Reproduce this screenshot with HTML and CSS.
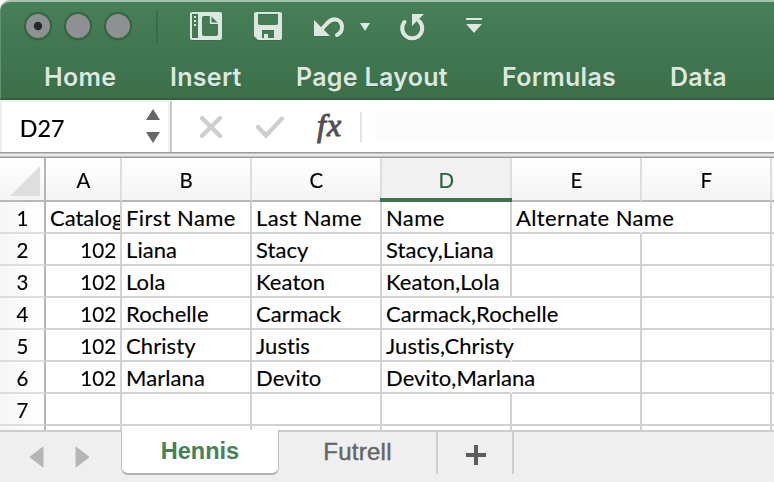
FILE: index.html
```html
<!DOCTYPE html>
<html lang="en">
<head>
<meta charset="utf-8">
<title>Workbook</title>
<link rel="stylesheet" href="styles.css">
</head>
<body>
<div class="window">
  <header class="ribbon">
    <div class="titlebar">
      <svg class="tools" width="774" height="54" viewBox="0 0 774 54" aria-hidden="true">
        <g fill="#8f9094" stroke="#35663f" stroke-width="2"><circle cx="38" cy="26" r="13"/><circle cx="78" cy="26" r="13"/><circle cx="118" cy="26" r="13"/></g>
        <circle cx="38" cy="26" r="4.2" fill="#252829"/>
        <path d="M157 10v32" stroke="#3b6c49" stroke-width="2"/>
        <g fill="#dce7df">
          <path fill-rule="evenodd" d="M192 12h28q2 0 2 2v24q0 2-2 2h-28q-2 0-2-2V14q0-2 2-2zM192 14v24h6V14zM204 16q-2 0-2 2v16q0 2 2 2h12q2 0 2-2V23l-7-7z"/>
          <path d="M194 16h2v2h-2zM194 20h2v2h-2zM194 24h2v2h-2z"/>
          <path fill-rule="evenodd" d="M256 12h24q2 0 2 2v24q0 2-2 2h-22l-4-4V14q0-2 2-2zM258 14v9q0 2 2 2h16q2 0 2-2v-9zM262 30v8h2v-4h4v4h6v-8z"/>
          <path d="M314 20v16h16z"/>
          <path d="M360 23h10l-5 8zM412 14h12l-12 12zM466 24h16l-8 9zM466 18h16v2h-16z"/>
        </g>
        <g fill="none" stroke="#dce7df" stroke-width="4">
          <path d="M210.700 16v7.300H218" stroke-width="1.600"/>
          <path d="M321 30l7-7.500C334 16.500 342 20 342 27C342 31 340 33.500 337 35" stroke-linecap="round"/>
          <path d="M404.500 22A10 10 0 1 0 419 21" stroke-linecap="round"/>
        </g>
      </svg>
    </div>
    <nav class="menu"><span class="home">Home</span><span class="insert">Insert</span><span class="layout">Page Layout</span><span class="formulas">Formulas</span><span class="data">Data</span></nav>
  </header>
  <section class="formula-bar">
    <div class="name-box"><span>D27</span>
      <svg width="14" height="34" viewBox="0 0 14 34" fill="#666"><path d="M0 11L7 0l7 11zM0 23h14L7 34z"/></svg>
    </div>
    <svg class="actions" width="90" height="30" viewBox="0 0 90 30" fill="none" stroke="#cfcfcf" stroke-width="4.4" stroke-linecap="round"><path d="M5 7l18 18M23 7L5 25M61 16l8 8.500L85 7.500"/></svg>
    <span class="fx">fx</span><div class="formula-input"></div>
  </section>
  <div class="divider"></div>
  <main class="sheet">
    <div class="row head"><div class="corner"><svg width="30" height="30"><path d="M0 30L30 0v30z" fill="#dedede"/></svg></div><div><span>A</span></div><div><span>B</span></div><div><span>C</span></div><div class="selected"><span>D</span></div><div><span>E</span></div><div><span>F</span></div><div></div></div>
    <div class="row titles"><b><span>1</span></b><div class="clip"><span>Catalog</span></div><div><span>First Name</span></div><div><span>Last Name</span></div><div><span>Name</span></div><div class="open"><span>Alternate Name</span></div><div></div><div></div></div>
    <div class="row"><b><span>2</span></b><div class="num"><span>102</span></div><div><span>Liana</span></div><div><span>Stacy</span></div><div><span>Stacy,Liana</span></div><div></div><div></div><div></div></div>
    <div class="row"><b><span>3</span></b><div class="num"><span>102</span></div><div><span>Lola</span></div><div><span>Keaton</span></div><div><span>Keaton,Lola</span></div><div></div><div></div><div></div></div>
    <div class="row"><b><span>4</span></b><div class="num"><span>102</span></div><div><span>Rochelle</span></div><div><span>Carmack</span></div><div class="open"><span>Carmack,Rochelle</span></div><div></div><div></div><div></div></div>
    <div class="row"><b><span>5</span></b><div class="num"><span>102</span></div><div><span>Christy</span></div><div><span>Justis</span></div><div class="open"><span>Justis,Christy</span></div><div></div><div></div><div></div></div>
    <div class="row"><b><span>6</span></b><div class="num"><span>102</span></div><div><span>Marlana</span></div><div><span>Devito</span></div><div class="open"><span>Devito,Marlana</span></div><div></div><div></div><div></div></div>
    <div class="row"><b><span>7</span></b><div></div><div></div><div></div><div></div><div></div><div></div><div></div></div>
    <div class="row last"><b></b><div></div><div></div><div></div><div></div><div></div><div></div><div></div></div>
  </main>
  <footer class="tabs">
    <div class="arrows"><svg width="62" height="22" viewBox="0 0 62 22" fill="#b5b5b5" stroke="#b5b5b5" stroke-linejoin="round"><path d="M1 11L14 1v20zM47 1v20L60 11z"/></svg></div>
    <div class="tab active">Hennis</div><div class="tab">Futrell</div>
    <div class="add"><svg width="20" height="20"><path d="M10 0v20M0 10h20" stroke="#5c5c5c" stroke-width="4"/></svg></div>
  </footer>
</div>
</body>
</html>
```
FILE: styles.css
```css
* { box-sizing: border-box; }
body { margin: 0; background: #fff; font-family: Lato, "Liberation Sans", sans-serif; font-variant-ligatures: none; color: #000; }
.window { width: 774px; height: 482px; overflow: hidden; display: flex; flex-direction: column; }
.ribbon { height: 100px; flex: none; background: linear-gradient(#477f59, #3b7049); border-top: 2px solid #a5c0ad; border-bottom: 2px solid #315f3d; border-left: 1px solid #639171; border-top-left-radius: 10px; }
.titlebar { height: 52px; }
.tools { display: block; margin: -2px 0 0 -1px; filter: drop-shadow(0 1px 0 #39694688); }
.menu { display: flex; height: 44px; padding-left: 43px; font: 600 25px/50px Inter, sans-serif; letter-spacing: .3px; color: #dce7df; white-space: nowrap; text-shadow: 0 1px 1px #305c3c88; }
.menu span { flex: none; }
.home { width: 126px; }
.insert { width: 126px; }
.layout { width: 206px; }
.formulas { width: 168px; }
.formula-bar { height: 52px; flex: none; display: flex; background: #fff; }
.name-box { width: 172px; display: flex; align-items: center; justify-content: space-between; padding: 0 10px 0 17px; border-left: 2px solid #eee; border-top: 2px solid #efefef; border-right: 2px solid #c8c8c8; box-shadow: inset -2px 0 #f0f0f0; font-size: 24px; }
.name-box span { padding-top: 1px; transform: scaleX(.97); -webkit-text-stroke: .2px; }
.name-box svg { margin-bottom: 2px; }
.actions { width: 90px; flex: none; margin: 11px 0 0 25px; }
.fx { width: 73px; padding-left: 30px; font: italic 32px/51px "Liberation Serif", serif; letter-spacing: 1px; color: #505050; -webkit-text-stroke: 1px #505050; }
.formula-input { flex: 1; margin: 12px 0; height: 30px; border-left: 2px solid #e2e2e2; background: linear-gradient(90deg, #fff 13px, #fcfcfc 13px); }
.divider { height: 6px; flex: none; background: #e9e9e9; border-top: 1px solid #999; border-bottom: 1px solid #999; box-shadow: inset 0 1px #c5c5c5, inset 0 -1px #c5c5c5; }
.sheet { height: 272px; flex: none; overflow: hidden; }
.row { display: grid; grid-template: 32px / 46px 76px repeat(5, 130px) 2px; height: 32px; font-size: 22px; line-height: 31px; letter-spacing: .08px; -webkit-text-stroke: .15px; }
.row > div { min-width: 0; border-right: 2px solid #d2d2d2; border-bottom: 2px solid #d2d2d2; padding-left: 4px; white-space: nowrap; }
.row > div:last-child { border-right: 0; padding: 0; }
.row > b { font-weight: 400; text-align: center; border-right: 2px solid #b5b5b5; border-bottom: 2px solid #ddd; background: linear-gradient(90deg, #f6f6f6, #fff); }
.row > b span, .head span { display: inline-block; transform: scaleX(.93); }
.row.titles > div { letter-spacing: .4px; }
.row .num { text-align: right; padding: 0 4px 0 0; letter-spacing: 0; }
.num span { display: inline-block; transform: scaleX(.94); transform-origin: right; }
.row .clip { overflow: hidden; }
.row.titles .clip { letter-spacing: 0; }
.row .open { border-right-color: transparent; }
.row.head { height: 44px; grid-template-rows: 44px; line-height: 43px; }
.row.head > div { padding: 0; text-align: center; border-right-color: #dedede; border-bottom-color: #b8b8b8; background: linear-gradient(#fff, #f4f4f4); }
.row.head > .corner { border-right-color: #b5b5b5; padding: 8px 4px 4px 10px; }
.corner svg { display: block; }
.row.head > .selected { position: relative; background: #f1f1f1; color: #296238; border-right-color: #ddd; }
.selected::after { content: ""; position: absolute; left: -2px; right: -2px; bottom: -2px; height: 4px; background: #39744b; }
.row.last { height: 4px; grid-template-rows: 4px; overflow: hidden; }
.row.last > * { border-bottom: 0; }
.tabs { height: 52px; flex: none; display: flex; background: #efefef; border-top: 2px solid #cdcdcd; font: 24px/39px "Liberation Sans", sans-serif; }
.arrows { width: 121px; padding: 14px 0 0 29px; }
.tab { width: 159px; height: 42px; text-align: center; color: #656565; letter-spacing: .25px; border-right: 2px solid #cfcfcf; -webkit-text-stroke: .45px #656565; }
.tab.active { width: 158px; height: 45px; margin-top: -2px; line-height: 43px; letter-spacing: 0; border: 1px solid #bbb; border-top: 0; border-bottom: 2px solid #b1b1b1; border-radius: 0 0 7px 7px; background: #fff; color: #438255; font-size: 23.5px; font-weight: 700; -webkit-text-stroke: 0; }
.add { width: 76px; height: 42px; padding: 13px 0 0 28px; border-right: 2px solid #cfcfcf; }
.arrows svg, .add svg { display: block; }
```
